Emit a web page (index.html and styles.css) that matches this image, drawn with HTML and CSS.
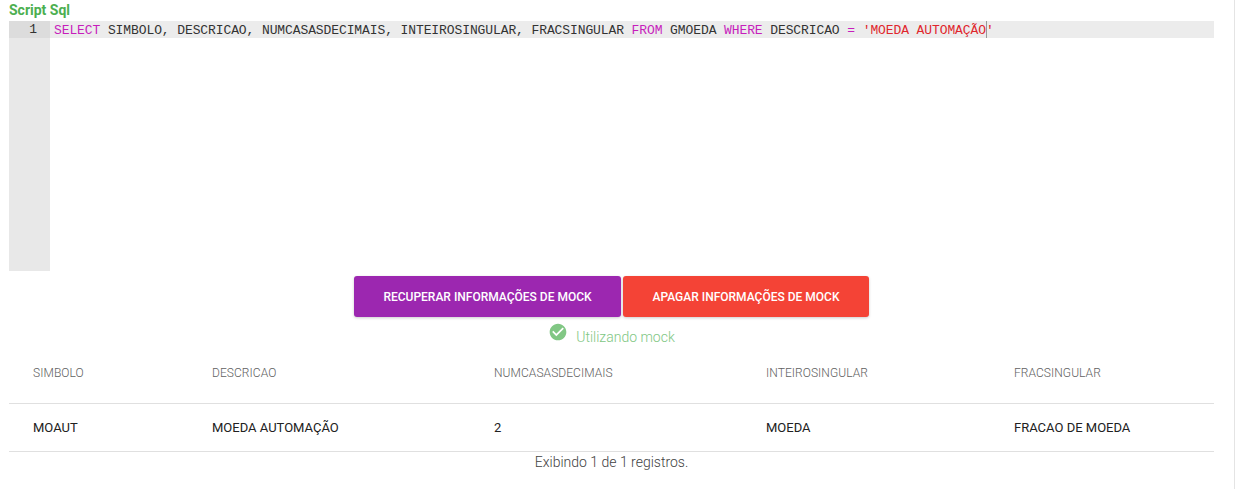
FILE: index.html
```html
<!DOCTYPE html>
<html lang="pt-BR">
<head>
<meta charset="utf-8">
<title>Script Sql</title>
<link rel="stylesheet" href="styles.css">
</head>
<body>
<main class="panel">
  <div class="label">Script Sql</div>
  <div class="editor">
    <div class="gutter"><div class="gutter-cell">1</div></div>
    <div class="code">
      <div class="code-line"><span class="kw">SELECT</span> SIMBOLO, DESCRICAO, NUMCASASDECIMAIS, INTEIROSINGULAR, FRACSINGULAR <span class="kw">FROM</span> GMOEDA <span class="kw">WHERE</span> DESCRICAO <span class="kw">=</span> <span class="str">'MOEDA AUTOMAÇÃO<span class="cursor"></span>'</span></div>
    </div>
  </div>
  <div class="actions">
    <button class="btn btn-purple">RECUPERAR INFORMAÇÕES DE MOCK</button>
    <button class="btn btn-red">APAGAR INFORMAÇÕES DE MOCK</button>
  </div>
  <div class="status">
    <svg class="status-icon" viewBox="0 0 24 24" width="20" height="20"><path fill="#81c784" d="M12 2C6.48 2 2 6.48 2 12s4.48 10 10 10 10-4.48 10-10S17.52 2 12 2zm-2 15-5-5 1.41-1.41L10 14.17l7.59-7.59L19 8l-9 9z"/></svg>
    <span class="status-text">Utilizando mock</span>
  </div>
  <table class="grid">
    <thead>
      <tr><th>SIMBOLO</th><th>DESCRICAO</th><th>NUMCASASDECIMAIS</th><th>INTEIROSINGULAR</th><th>FRACSINGULAR</th></tr>
    </thead>
    <tbody>
      <tr><td>MOAUT</td><td>MOEDA AUTOMAÇÃO</td><td>2</td><td>MOEDA</td><td>FRACAO DE MOEDA</td></tr>
    </tbody>
  </table>
  <div class="footer">Exibindo 1 de 1 registros.</div>
</main>
</body>
</html>
```

FILE: styles.css
```css
* { box-sizing: border-box; }
html, body { margin: 0; height: 100%; background: #fff; }
body { font-family: Roboto, "Liberation Sans", sans-serif; overflow: hidden; }
.panel {
  height: 489px;
  padding: 0 20px 0 9px;
  border-right: 1px solid #e4e4e4;
}
.label {
  height: 21px;
  font-size: 14px;
  line-height: 20px;
  font-weight: 700;
  color: #4caf50;
}
.editor { display: flex; height: 250px; font-family: "Liberation Mono", monospace; font-size: 13px; line-height: 17px; }
.gutter { width: 41px; background: #e8e8e8; }
.gutter-cell { height: 17px; background: #dcdcdc; text-align: right; padding-right: 13px; color: #333; }
.code { flex: 1; }
.code-line { height: 17px; padding-left: 4px; background: #ececec; color: #333; white-space: pre; letter-spacing: -0.1px; }
.kw { color: #c71ebc; }
.str { color: #e0262c; }
.cursor { display: inline-block; width: 1px; height: 17px; margin: 0 -1px -4px 0; background: #999; }
.actions { display: flex; justify-content: center; gap: 2px; margin-top: 5px; }
.btn {
  height: 41px;
  border: 0;
  border-radius: 3px;
  font-family: inherit;
  font-size: 12px;
  font-weight: 500;
  color: #fff;
  box-shadow: 0 1px 3px rgba(0,0,0,.2);
}
.btn-purple { width: 267px; background: #9c27b0; }
.btn-red { width: 246px; background: #f44336; }
.status { display: flex; justify-content: center; align-items: flex-start; gap: 8px; height: 31px; margin-top: 5px; }
.status-icon { display: block; }
.status-text { font-size: 14px; font-weight: 300; line-height: 20px; margin-top: 5px; color: #81c784; }
.grid { width: 100%; border-collapse: collapse; table-layout: fixed; }
.grid th, .grid td { text-align: left; padding: 0 0 0 24px; border-bottom: 1px solid #e0e0e0; }
.grid th { height: 50px; padding-top: 13px; vertical-align: top; font-size: 12px; font-weight: 300; letter-spacing: 0.06px; color: #616161; }
.grid td { height: 48px; font-size: 13px; color: #212121; }
.grid th:nth-child(1) { width: 179px; }
.grid th:nth-child(2) { width: 282px; }
.grid th:nth-child(3) { width: 272px; }
.grid th:nth-child(4) { width: 248px; }
.footer { text-align: center; font-size: 14px; font-weight: 300; line-height: 20px; color: #424242; }
```
